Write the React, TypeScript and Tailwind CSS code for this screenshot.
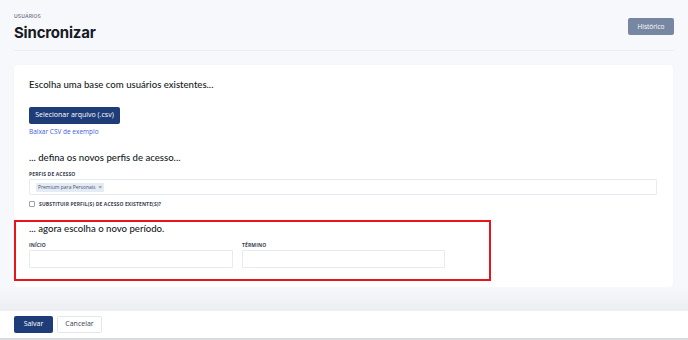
export default function App() {
  return (
    <div
      className="w-[688px] h-[340px] bg-[#f7f8fb] flex flex-col overflow-hidden text-[#1f2433]"
      style={{ fontFamily: '"Open Sans", "Noto Sans", sans-serif' }}
    >
      {/* HEADER */}
      <div className="mx-[14px] pt-[13px] h-[51px] border-b border-[#eceef4] flex justify-between">
        <div className="flex flex-col">
          <span
            className="text-[5px] font-semibold tracking-wide text-[#7a8194] leading-[6px]"
            style={{ fontFamily: "Inter, sans-serif" }}
          >
            USUÁRIOS
          </span>
          <h1
            className="mt-[4px] text-[15px] font-bold leading-[19px] tracking-[-0.2px] text-[#161a24]"
            style={{ fontFamily: "Inter, sans-serif" }}
          >
            Sincronizar
          </h1>
        </div>
        <button className="mt-[5px] h-[17px] w-[46px] rounded-[2px] bg-[#7787a2] text-white text-[6.5px]">
          Histórico
        </button>
      </div>

      {/* CARD */}
      <div className="mx-[14px] mt-[14px] w-[659px] h-[222px] bg-white rounded-[4px] shadow-[0_0_2px_rgba(0,0,0,0.04)] flex flex-col">
        <div className="px-[15px] pt-[13px]">
          <h2
            className="text-[9.6px] leading-[14px] font-medium text-[#161a24]"
            style={{ fontFamily: "Lato, sans-serif" }}
          >
            Escolha uma base com usuários existentes...
          </h2>
          <button className="mt-[15px] h-[17px] w-[91px] rounded-[2px] bg-[#1e3d78] text-white text-[7px]">
            Selecionar arquivo (.csv)
          </button>
          <div className="mt-[3px] text-[6.5px] leading-[10px] text-[#3b5ee0]">
            Baixar CSV de exemplo
          </div>

          <h2
            className="mt-[14px] text-[9.6px] leading-[14px] font-medium text-[#161a24]"
            style={{ fontFamily: "Lato, sans-serif" }}
          >
            ... defina os novos perfis de acesso...
          </h2>
          <div className="mt-[6px] text-[5px] leading-[6px] font-bold tracking-wide text-[#3a4050]">
            PERFIS DE ACESSO
          </div>
          <div className="mt-[2px] h-[16px] w-[628px] border border-[#e6eaf2] rounded-[1px] flex items-center px-[6px]">
            <span className="h-[9px] px-[2px] bg-[#e4ebf5] rounded-[1px] text-[5px] leading-[9px] text-[#4a5468] flex items-center gap-[3px]">
              Premium para Personais <span className="text-[6px]">×</span>
            </span>
          </div>
          <label className="mt-[6px] flex items-center gap-[4px]">
            <span className="w-[6px] h-[6px] border border-[#9aa1b0] rounded-[1px] bg-white" />
            <span className="text-[5px] leading-[6px] font-bold tracking-wide text-[#3a4050]">
              SUBSTITUIR PERFIL(S) DE ACESSO EXISTENTE(S)?
            </span>
          </label>
        </div>

        <div className="mt-[13px] w-[477px] h-[61px] border-2 border-[#e8141c] px-[13px]">
          <h2
            className="text-[9.6px] leading-[14px] font-medium text-[#161a24]"
            style={{ fontFamily: "Lato, sans-serif" }}
          >
            ... agora escolha o novo período.
          </h2>
          <div className="mt-[6px] flex gap-[9px]">
            <div className="flex flex-col">
              <span className="text-[5px] leading-[6px] font-bold tracking-wide text-[#3a4050]">
                INÍCIO
              </span>
              <div className="mt-[2px] w-[204px] h-[18px] border border-[#e6eaf2] rounded-[1px]" />
            </div>
            <div className="flex flex-col">
              <span className="text-[5px] leading-[6px] font-bold tracking-wide text-[#3a4050]">
                TÉRMINO
              </span>
              <div className="mt-[2px] w-[203px] h-[18px] border border-[#e6eaf2] rounded-[1px]" />
            </div>
          </div>
        </div>
      </div>

      {/* FADE + FOOTER */}
      <div className="flex-1 bg-gradient-to-b from-[#f7f8fb] to-[#eceef2]" />
      <div className="h-[29px] bg-white border-b-2 border-[#d9dbe0] flex items-center gap-[4px] px-[14px]">
        <button className="h-[17px] w-[39px] rounded-[2px] bg-[#1e3d78] text-white text-[7px]">
          Salvar
        </button>
        <button className="h-[17px] w-[45px] rounded-[2px] bg-white border border-[#e3e6ec] text-[#3a4050] text-[7px]">
          Cancelar
        </button>
      </div>
    </div>
  );
}
